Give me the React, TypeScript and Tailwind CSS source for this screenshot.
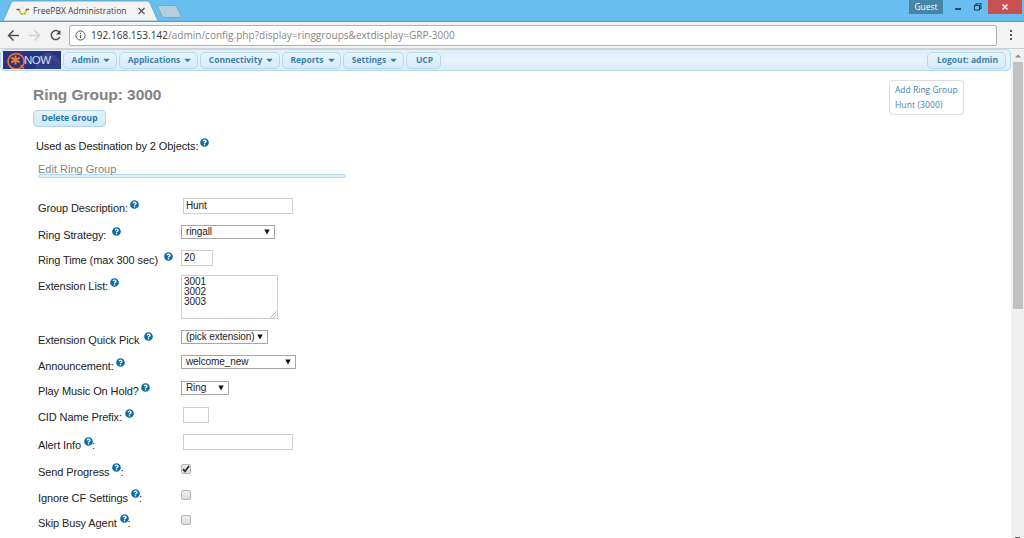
import { FaCaretDown, FaQuestionCircle } from "react-icons/fa";

interface Field {
    label: string;
    // tuned per row, the original table cells are not evenly spaced
    row: string;
    labelClass: string;
    helpClass: string;
    colon?: boolean;
    control: React.ReactNode;
}

const UI_FONT = "font-['Open_Sans','Noto_Sans',sans-serif]";

const Help = ({ className = "" }: { className?: string }) => (
    <FaQuestionCircle className={`h-[9px] w-[9px] shrink-0 text-[#0a6ba5] ${className}`} />
);

const TextInput = ({ className, value = "" }: { className: string; value?: string }) => (
    <div className={`flex items-center border border-[#cfcfcf] bg-white px-[2px] pb-px text-[10px] leading-none tracking-[-0.1px] ${className}`}>
        {value}
    </div>
);

const Select = ({ className, value }: { className: string; value: string }) => (
    <div className={`flex h-[14px] items-center justify-between border border-[#a6a6a6] bg-white pr-[4px] pl-[4px] text-[10px] leading-none tracking-[-0.1px] ${className}`}>
        <span className="whitespace-nowrap">{value}</span>
        <svg className="shrink-0" width="6" height="6" viewBox="0 0 6 6">
            <path d="M0.3 0.5h5.4L3 5.5z" fill="#111" />
        </svg>
    </div>
);

const Checkbox = ({ checked = false }: { checked?: boolean }) => (
    <div className="h-[10px] w-[10px] rounded-[2px] border border-[#b5b5b5] bg-linear-to-b from-[#eeeeee] to-[#dcdcdc]">
        {checked && (
            <svg width="8" height="8" viewBox="0 0 8 8" fill="none" stroke="#333" strokeWidth="1.8">
                <path d="M1 4.2l2 2.2L7 1" />
            </svg>
        )}
    </div>
);

const fields: Field[] = [
    { label: "Group Description:", row: "h-[27px]", labelClass: "pt-[2px]", helpClass: "ml-[2px]", control: <TextInput className="ml-[2px] h-[16px] w-[110px]" value="Hunt" /> },
    { label: "Ring Strategy:", row: "h-[25px]", labelClass: "pt-[2px]", helpClass: "ml-[6px]", control: <Select className="w-[94px]" value="ringall" /> },
    { label: "Ring Time (max 300 sec)", row: "h-[25px]", labelClass: "pt-[2px]", helpClass: "ml-[6px]", control: <TextInput className="h-[16px] w-[32px]" value="20" /> },
    {
        label: "Extension List:", row: "h-[55px]", labelClass: "pt-[3px]", helpClass: "ml-[2px]",
        control: (
            <div className="relative h-[44px] w-[97px] border border-[#cfcfcf] px-[2px] pt-px text-[10px] leading-[10px] tracking-[-0.1px] whitespace-pre">
                {"3001\n3002\n3003"}
                <svg className="absolute right-0 bottom-0" width="7" height="7" viewBox="0 0 7 7" stroke="#999" strokeWidth="0.8">
                    <path d="M0.5 6.5l6-6M3.5 6.5l3-3" />
                </svg>
            </div>
        ),
    },
    { label: "Extension Quick Pick", row: "h-[25px]", labelClass: "pt-[2px]", helpClass: "ml-[5px]", control: <Select className="w-[87px]" value="(pick extension)" /> },
    { label: "Announcement:", row: "h-[26px]", labelClass: "pt-[3px]", helpClass: "ml-[2px]", control: <Select className="w-[115px]" value="welcome_new" /> },
    { label: "Play Music On Hold?", row: "h-[26px]", labelClass: "pt-[2px]", helpClass: "ml-[2px]", control: <Select className="w-[48px]" value="Ring" /> },
    { label: "CID Name Prefix:", row: "h-[27px]", labelClass: "pt-[2px]", helpClass: "ml-[3px]", control: <TextInput className="ml-[2px] h-[16px] w-[26px]" /> },
    { label: "Alert Info", row: "h-[30px]", labelClass: "pt-[3px]", helpClass: "ml-[3px]", colon: true, control: <TextInput className="ml-[2px] h-[16px] w-[110px]" /> },
    { label: "Send Progress", row: "h-[26px]", labelClass: "", helpClass: "ml-[3px] -mt-px", colon: true, control: <Checkbox checked /> },
    { label: "Ignore CF Settings", row: "h-[25px]", labelClass: "", helpClass: "ml-[3px] -mt-px", colon: true, control: <Checkbox /> },
    { label: "Skip Busy Agent", row: "h-[22px]", labelClass: "", helpClass: "ml-[3px] -mt-px", colon: true, control: <Checkbox /> },
];

const menu = [
    { name: "Admin", width: "w-[54px]", caret: true },
    { name: "Applications", width: "w-[79px]", caret: true },
    { name: "Connectivity", width: "w-[80px]", caret: true },
    { name: "Reports", width: "w-[59px]", caret: true },
    { name: "Settings", width: "w-[61px]", caret: true },
    { name: "UCP", width: "w-[35px]", caret: false },
];

const NAV_BUTTON = "flex h-[17px] items-center justify-center rounded-[5px] border border-[#b6d8ec] bg-linear-to-b from-[#e8f4fb] to-[#d6ebf8] pl-[2px] text-[8.5px] font-bold whitespace-nowrap text-[#3c82ac]";

const Browser = () => (
    <header className={UI_FONT}>
        <div className="flex h-[21px] bg-[#68bfef]">
            <div className="relative h-[21px] w-[184px]">
                <svg className="absolute inset-0" width="184" height="21" viewBox="0 0 184 21">
                    <path d="M3 21L11 3Q12 1 14 1H147Q149 1 150 3L158 21z" fill="#f3f3f3" stroke="#5a9cc3" strokeWidth="0.8" />
                    <path d="M159 5.500H174Q176 5.500 177 7L181 16Q182 17.500 180 17.500H165Q163 17.500 162 16L158 7Q157.500 5.500 159 5.500z" fill="#b5cfdf" stroke="#6f9fbc" strokeWidth="0.8" />
                    <g fill="none" strokeWidth="1.500">
                        <path d="M16.500 9.500h3.200" stroke="#b83a20" />
                        <path d="M25.800 9.500h3.200" stroke="#b83a20" />
                        <path d="M19.500 10c0 5.500 6.500 5.500 6.500 0" stroke="#a9bd2a" strokeWidth="2" strokeDasharray="2.500 0.800" />
                        <path d="M21 8h3.500" stroke="#dfe58b" strokeDasharray="1 1" />
                    </g>
                    <path d="M138.500 8l6 6M144.500 8l-6 6" stroke="#555" strokeWidth="1.200" />
                </svg>
                <span className="relative block pt-[4px] pl-[33px] text-[8.5px] leading-[14px] tracking-[-0.02px] whitespace-nowrap text-[#444]">FreePBX Administration</span>
            </div>
            <div className="ml-auto flex h-[14px]">
                <div className="flex w-[34px] items-center justify-center bg-[#4585a8] text-[8.5px] leading-none text-white">Guest</div>
                <svg width="45" height="14" viewBox="0 0 45 14" fill="none" stroke="#1f3b4d">
                    <path d="M12 9h6" strokeWidth="1.800" />
                    <path d="M31.500 5.500h5v4.500h-5zM33 5.500v-1.700h5V8.500h-1.500" strokeWidth="1.100" />
                </svg>
                <div className="flex w-[34px] items-center justify-center bg-[#c75050]">
                    <svg width="6" height="6" viewBox="0 0 6 6" stroke="#fff" strokeWidth="1.300">
                        <path d="M0.500 0.500l5 5M5.500 0.500l-5 5" />
                    </svg>
                </div>
                <div className="w-[2px]" />
            </div>
        </div>
        <div className="flex h-[28px] items-center border-t border-[#599fc6] border-b border-b-[#cfcfcf] bg-[#f3f3f3]">
            <svg className="shrink-0" width="69" height="26" viewBox="0 0 69 26" fill="none" strokeWidth="1.500">
                <path d="M19 13.500H9M13.500 8.500l-5 5 5 5" stroke="#505050" />
                <path d="M29 13.500h10M34.500 8.500l5 5-5 5" stroke="#cfcfcf" />
                <path d="M59.500 10.500a4.500 4.500 0 1 0 .4 4.500" stroke="#505050" />
                <path d="M60.500 8v4.500H56z" fill="#505050" />
            </svg>
            <div className="flex h-[21px] w-[928px] shrink-0 items-center rounded-[2px] border border-[#b0b0b0] bg-white pt-px pl-[5px] text-[10px] whitespace-nowrap">
                <svg className="mr-[5px]" width="11" height="11" viewBox="0 0 11 11" fill="none" stroke="#555">
                    <circle cx="5.500" cy="5.500" r="4.600" />
                    <path d="M5.500 5v3.200M5.500 2.800v1.300" strokeWidth="1.200" />
                </svg>
                <span className="tracking-[0.03px] text-[#333]">192.168.153.142</span>
                <span className="tracking-[0.03px] text-[#858585]">/admin/config.php?display=ringgroups&amp;extdisplay=GRP-3000</span>
            </div>
            <svg className="ml-[12px]" width="4" height="12" viewBox="0 0 4 12" fill="#555">
                <path d="M1 1h2v2H1zM1 5h2v2H1zM1 9h2v2H1z" />
            </svg>
        </div>
    </header>
);

const Logo = () => (
    <div className="relative flex h-[18px] w-[58px] items-center overflow-hidden bg-[#28347d]">
        <svg className="absolute inset-0" width="58" height="18" viewBox="0 0 58 18" fill="none">
            <circle cx="45" cy="14" r="12" fill="#3a4590" />
            <path d="M34 18c2-8 12-12 22-6v6z" fill="#303c87" />
            <path d="M19 15.500A8 7.700 0 1 1 21 11.500c-.3 3-2 4-3.500 3.200l3.500 2.500" stroke="#ee6b2d" strokeWidth="1.700" />
            <path d="M12.500 4.500v9M8.300 6.700l8.400 4.600M8.300 11.300l8.400-4.600" stroke="#f47a35" strokeWidth="2" />
        </svg>
        <span className="relative ml-[21px] pt-px font-['Liberation_Sans',Arial,sans-serif] text-[11.5px] leading-none tracking-[-0.5px] text-[#d8dcf0]">NOW</span>
    </div>
);

const NavBar = () => (
    <nav className={`flex h-[22px] items-center rounded-[4px] border border-[#b9d9ec] bg-linear-to-b from-[#dceefa] via-[#e8f4fb] to-[#d8ecf9] pr-[4px] pl-[2px] ${UI_FONT}`}>
        <Logo />
        <div className="ml-[2px] flex gap-[2px]">
            {menu.map((item) => (
                <div key={item.name} className={`${NAV_BUTTON} ${item.width}`}>
                    <span>{item.name}</span>
                    {item.caret && <FaCaretDown className="ml-[4px] h-[10px] w-[7px]" />}
                </div>
            ))}
        </div>
        <div className={`${NAV_BUTTON} ml-auto w-[79px]`}>Logout: admin</div>
    </nav>
);

const RingGroupForm = () => (
    <main className="pl-[33px]">
        <h1 className="pt-[14px] text-[15.5px] leading-[19px] font-bold tracking-[-0.05px] text-[#828282]">Ring Group: 3000</h1>
        <div className={`mt-[6px] flex h-[17px] w-[73px] items-center justify-center rounded-[4px] border border-[#b3d6ec] bg-linear-to-b from-[#e4f2fb] to-[#d3e9f7] text-[8.500px] font-bold text-[#1f78ac] ${UI_FONT}`}>
            Delete Group
        </div>
        <div className="mt-[11px] ml-[3px] flex h-[16px] text-[11px] leading-[16px] tracking-[-0.1px]">
            <span>Used as Destination by 2 Objects:</span>
            <Help className="ml-[2px]" />
        </div>
        <div className="mt-[8px] ml-[5px] w-[308px]">
            <h5 className="h-[12px] text-[11px] leading-[14px] text-[#828282]">Edit Ring Group</h5>
            <div className="h-[4px] rounded-[2px] border border-[#b9d8ec] bg-[#dceefa]" />
        </div>
        <div className="mt-[20px] ml-[5px]">
            {fields.map((field) => (
                <div key={field.label} className={`flex items-start ${field.row}`}>
                    <div className={`flex w-[143px] text-[11px] leading-[16px] tracking-[-0.1px] whitespace-nowrap ${field.labelClass}`}>
                        <span>{field.label}</span>
                        <Help className={field.helpClass} />
                        {field.colon && <span className="-ml-px">:</span>}
                    </div>
                    {field.control}
                </div>
            ))}
        </div>
    </main>
);

const Scrollbar = () => (
    <div className="flex w-[13px] flex-col items-center bg-[#f0f0f0]">
        <svg className="mt-[5px]" width="6" height="4" viewBox="0 0 6 4">
            <path d="M0 3.500L3 0.500l3 3z" fill="#8a8a8a" />
        </svg>
        <div className="mt-[4px] h-[247px] w-[10px] bg-[#c1c1c1]" />
        <div className="mt-auto h-px w-[5px] bg-[#606060]" />
    </div>
);

const App = () => {
    return (
        <div className="flex h-[538px] w-[1024px] flex-col overflow-hidden bg-white font-['Liberation_Sans',Arial,sans-serif] text-[#222]">
            <Browser />
            <div className="flex min-h-0 flex-1">
                <div className="w-[1011px]">
                    <NavBar />
                    <div className="flex items-start justify-between">
                        <RingGroupForm />
                        <aside className={`mt-[9px] mr-[47px] h-[35px] w-[75px] rounded-[4px] border border-[#dddddd] pt-px pl-[5px] text-[8.500px] leading-[15px] whitespace-nowrap text-[#3f83ac] ${UI_FONT}`}>
                            <div>Add Ring Group</div>
                            <div className="tracking-[0.1px]">Hunt (3000)</div>
                        </aside>
                    </div>
                </div>
                <Scrollbar />
            </div>
        </div>
    );
};

export default App;
